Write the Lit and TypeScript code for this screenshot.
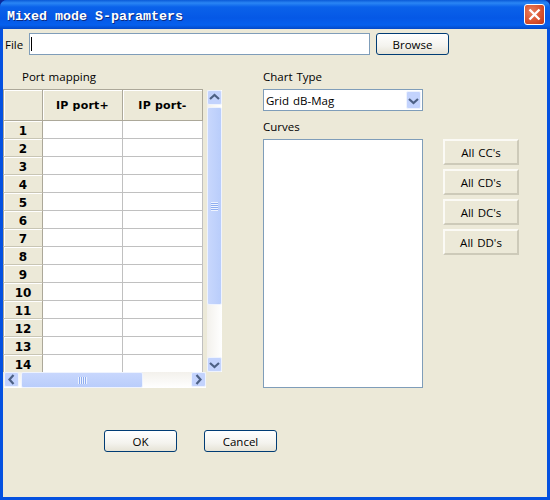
import { LitElement, html, css, svg } from 'lit';
import { customElement } from 'lit/decorators.js';

const chevrons: Record<string, string> = {
  up: 'M3 9 L7.5 5 L12 9',
  down: 'M3 6 L7.5 10 L12 6',
  left: 'M9.5 3 L5.5 7.5 L9.5 12',
  right: 'M5.5 3 L9.5 7.5 L5.5 12',
};

const arrow = (dir: string) => html`<svg class="chev" width="15" height="15" viewBox="0 0 15 15">
  ${svg`<path d=${chevrons[dir]} fill="none" stroke="#4d6185" stroke-width="2.2"/>`}
</svg>`;

@customElement('app-root')
export class AppRoot extends LitElement {
  static styles = css`
    :host {
      display: block;
      width: 550px;
      height: 500px;
      background: #0a2a9a;
      font-family: 'Open Sans', 'Liberation Sans', sans-serif;
      font-size: 11.5px;
      word-spacing: 1px;
      color: #000;
    }
    .window {
      height: 500px;
      display: flex;
      flex-direction: column;
      box-sizing: border-box;
      border-radius: 7px 7px 0 0;
      overflow: hidden;
      background: #0451e0;
    }
    .titlebar {
      height: 29px;
      flex: none;
      display: flex;
      align-items: center;
      padding: 0 5px 0 7px;
      background: linear-gradient(#0a5ad8 0, #2a86f4 3px, #0a62ea 7px, #0558e6 18px, #0560ee 25px, #0349c8 29px);
    }
    .title {
      flex: 1;
      padding-top: 3px;
      font-family: 'Liberation Mono', monospace;
      font-size: 13.33px;
      font-weight: bold;
      word-spacing: 0;
      color: #fff;
      text-shadow: 1px 1px 0 #0a2a80;
      white-space: pre;
    }
    .close {
      width: 19px;
      height: 19px;
      box-sizing: content-box;
      border: 1px solid #fff;
      border-radius: 3px;
      display: flex;
      align-items: center;
      justify-content: center;
      background: radial-gradient(circle at 35% 35%, #e8805f, #d9502c 60%, #b9361a);
    }
    .body {
      flex: 1;
      margin: 0 3px 3px;
      background: #ece9d8;
      display: flex;
      flex-direction: column;
    }
    .file-row {
      display: flex;
      align-items: center;
      height: 22px;
      margin-top: 4px;
      padding-left: 2px;
    }
    .file-row label {
      width: 24px;
    }
    .file-input {
      width: 341px;
      height: 22px;
      box-sizing: border-box;
      border: 1px solid #7f9db9;
      background: #fff;
      display: flex;
      align-items: center;
      padding-left: 1px;
    }
    .caret {
      width: 1px;
      height: 14px;
      background: #000;
    }
    .btn {
      width: 73px;
      height: 22px;
      box-sizing: border-box;
      border: 1px solid #003c74;
      border-radius: 3px;
      background: linear-gradient(#fff, #f4f3ee 60%, #e6e3d6);
      display: flex;
      align-items: center;
      justify-content: center;
    }
    .browse {
      margin-left: 6px;
    }
    .main {
      display: flex;
      margin-top: 14px;
    }
    .label {
      height: 16px;
      line-height: 16px;
      margin-bottom: 4px;
    }
    .ports {
      width: 219px;
      flex: none;
    }
    .ports .label {
      padding-left: 19px;
    }
    .table-wrap {
      display: flex;
    }
    .grid-clip {
      width: 200px;
      height: 283px;
      overflow: hidden;
      background: #fff;
    }
    .grid {
      display: grid;
      grid-template-columns: 40px 80px 80px;
      grid-template-rows: 32px;
      grid-auto-rows: 18px;
      font-family: 'DejaVu Sans', sans-serif;
      font-size: 11px;
      font-weight: bold;
      word-spacing: 0;
    }
    .grid > div {
      box-sizing: border-box;
      display: flex;
      align-items: center;
      justify-content: center;
    }
    .head {
      background: #ece9d8;
      border: 1px solid #aca899;
      border-left: none;
      box-shadow: inset 1px 1px 0 #fff;
      letter-spacing: 0.2px;
    }
    .head.first {
      border-left: 1px solid #aca899;
    }
    .num {
      background: #ece9d8;
      border-left: 1px solid #aca899;
      border-right: 1px solid #aca899;
      border-bottom: 1px solid #c8c5b4;
      box-shadow: inset 1px 1px 0 #fff;
      font-size: 12px;
      padding-top: 2px;
    }
    .cell {
      background: #fff;
      border-right: 1px solid #c0c0c0;
      border-bottom: 1px solid #c0c0c0;
    }
    .vbar {
      width: 15px;
      height: 282px;
      margin: 1px 0 0 4px;
      display: flex;
      flex-direction: column;
      background: linear-gradient(90deg, #f3f1ec, #fff);
    }
    .sb-btn {
      width: 15px;
      height: 15px;
      flex: none;
      box-sizing: border-box;
      display: flex;
      align-items: center;
      justify-content: center;
      background: #c3d3fd;
      border: 1px solid #eef3fe;
      border-radius: 2px;
    }
    .chev {
      flex: none;
      margin: -1px;
    }
    .vthumb {
      flex: none;
      height: 198px;
      margin-top: 2px;
      box-sizing: border-box;
      border: 1px solid #eef3fe;
      border-radius: 2px;
      background: linear-gradient(90deg, #c8d7fd, #b9cdfb);
      display: flex;
      align-items: center;
      justify-content: center;
    }
    .vgrip {
      width: 7px;
      height: 9px;
      background: repeating-linear-gradient(#eef3fe 0 1px, #8faef0 1px 2px);
    }
    .vtrack {
      flex: 1;
    }
    .hbar {
      width: 202px;
      height: 16px;
      margin-left: 1px;
      display: flex;
      background: linear-gradient(#f3f1ec, #fff);
    }
    .hthumb {
      flex: none;
      width: 122px;
      margin-left: 2px;
      box-sizing: border-box;
      border: 1px solid #eef3fe;
      border-radius: 2px;
      background: linear-gradient(#c8d7fd, #b9cdfb);
      display: flex;
      align-items: center;
      justify-content: center;
    }
    .hgrip {
      width: 9px;
      height: 7px;
      background: repeating-linear-gradient(90deg, #eef3fe 0 1px, #8faef0 1px 2px);
    }
    .htrack {
      flex: 1;
    }
    .chart {
      width: 160px;
      flex: none;
      margin-left: 41px;
    }
    .select {
      height: 22px;
      box-sizing: border-box;
      border: 1px solid #7f9db9;
      background: #fff;
      display: flex;
      align-items: center;
      justify-content: space-between;
      padding: 0 1px 0 2px;
      margin-bottom: 8px;
    }
    .select .sb-btn {
      height: 18px;
      width: 15px;
    }
    .list {
      height: 249px;
      box-sizing: border-box;
      border: 1px solid #7f9db9;
      background: #fff;
    }
    .quick {
      margin: 70px 0 0 20px;
      display: flex;
      flex-direction: column;
      gap: 4px;
    }
    .flat {
      width: 76px;
      height: 26px;
      box-sizing: border-box;
      background: #ece9d8;
      border: 2px solid;
      border-color: #fbfaf5 #cdcab9 #cdcab9 #fbfaf5;
      display: flex;
      align-items: center;
      justify-content: center;
    }
    .footer {
      display: flex;
      gap: 27px;
      margin-top: 42px;
      padding-left: 101px;
    }
  `;

  render() {
    const rows = Array.from({ length: 14 }, (_, i) => i + 1);
    return html`
      <div class="window">
        <div class="titlebar">
          <div class="title">Mixed mode S-paramters</div>
          <div class="close">
            <svg width="13" height="13" viewBox="0 0 13 13">
              <path d="M1.5 1.5 L11.5 11.5 M11.5 1.5 L1.5 11.5" stroke="#fff" stroke-width="2.4" fill="none" />
            </svg>
          </div>
        </div>
        <div class="body">
          <div class="file-row">
            <label>File</label>
            <div class="file-input"><span class="caret"></span></div>
            <div class="btn browse">Browse</div>
          </div>
          <div class="main">
            <div class="ports">
              <div class="label">Port mapping</div>
              <div class="table-wrap">
                <div class="grid-clip">
                  <div class="grid">
                    <div class="head first"></div>
                    <div class="head">IP port+</div>
                    <div class="head">IP port-</div>
                    ${rows.map(
                      (n) => html`
                        <div class="num">${n}</div>
                        <div class="cell"></div>
                        <div class="cell"></div>
                      `,
                    )}
                  </div>
                </div>
                <div class="vbar">
                  <div class="sb-btn">${arrow('up')}</div>
                  <div class="vthumb"><div class="vgrip"></div></div>
                  <div class="vtrack"></div>
                  <div class="sb-btn">${arrow('down')}</div>
                </div>
              </div>
              <div class="hbar">
                <div class="sb-btn">${arrow('left')}</div>
                <div class="hthumb"><div class="hgrip"></div></div>
                <div class="htrack"></div>
                <div class="sb-btn">${arrow('right')}</div>
              </div>
            </div>
            <div class="chart">
              <div class="label">Chart Type</div>
              <div class="select">
                <span>Grid dB-Mag</span>
                <div class="sb-btn">${arrow('down')}</div>
              </div>
              <div class="label">Curves</div>
              <div class="list"></div>
            </div>
            <div class="quick">
              <div class="flat">All CC's</div>
              <div class="flat">All CD's</div>
              <div class="flat">All DC's</div>
              <div class="flat">All DD's</div>
            </div>
          </div>
          <div class="footer">
            <div class="btn">OK</div>
            <div class="btn">Cancel</div>
          </div>
        </div>
      </div>
    `;
  }
}
